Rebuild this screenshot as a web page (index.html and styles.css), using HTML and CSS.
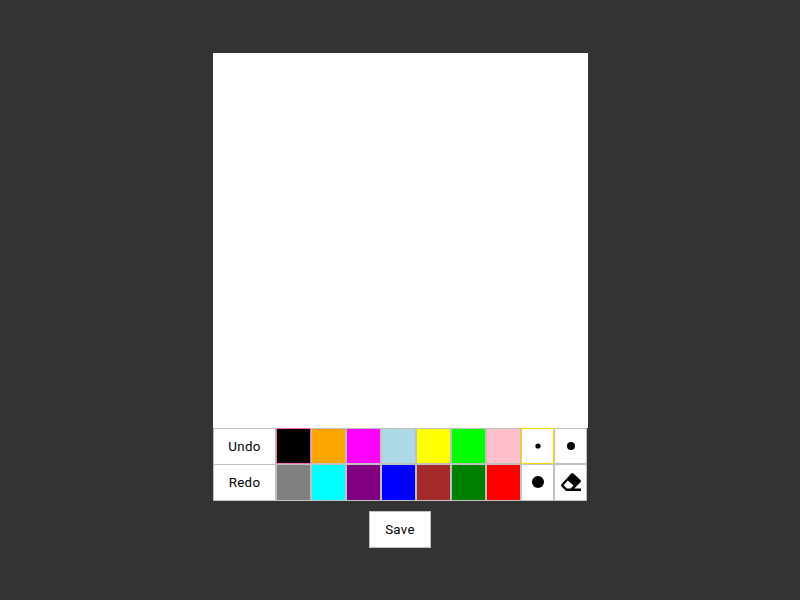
FILE: index.html
```html
<!DOCTYPE html>
<html lang="en">
<head>
<meta charset="utf-8">
<title>Drawing</title>
<link rel="stylesheet" href="styles.css">
</head>
<body>
<main class="app">
  <div class="canvas"></div>
  <div class="toolbar">
    <button class="btn undo">Undo</button>
    <button class="swatch black selected"></button>
    <button class="swatch orange"></button>
    <button class="swatch magenta"></button>
    <button class="swatch lightblue"></button>
    <button class="swatch yellow"></button>
    <button class="swatch lime"></button>
    <button class="swatch pink"></button>
    <button class="tool active"><svg width="24" height="24"><circle cx="12" cy="12" r="2.6"/></svg></button>
    <button class="tool"><svg width="24" height="24"><circle cx="12" cy="12" r="4"/></svg></button>
    <button class="btn redo">Redo</button>
    <button class="swatch gray"></button>
    <button class="swatch cyan"></button>
    <button class="swatch purple"></button>
    <button class="swatch blue"></button>
    <button class="swatch brown"></button>
    <button class="swatch green"></button>
    <button class="swatch red"></button>
    <button class="tool lower"><svg width="24" height="24"><circle cx="12" cy="12" r="6"/></svg></button>
    <button class="tool lower"><svg width="20" height="18" viewBox="0 0 20 18"><path fill-rule="evenodd" d="M10.300.6a1.600 1.600 0 0 1 2.200 0l6.900 6.300a1.600 1.600 0 0 1 0 2.300L13.300 15.500H20V18H5L.6 13.400a1.600 1.600 0 0 1 0-2.300zM6.800 7.500L3 11.700a.8.8 0 0 0 0 1.100l2.900 2.700h3.800l2.300-2.500a.8.8 0 0 0 0-1z"/></svg></button>
  </div>
  <button class="btn save">Save</button>
</main>
</body>
</html>
```
FILE: styles.css
```css
* {
  box-sizing: border-box;
}

body {
  margin: 0;
  background: #333;
}

.app {
  display: flex;
  flex-direction: column;
  align-items: center;
  width: 375px;
  margin-left: 213px;
  padding-top: 53px;
}

.canvas {
  width: 375px;
  height: 375px;
  background: #fff;
}

.toolbar {
  display: grid;
  grid-template-columns: 63px repeat(7, 35px) repeat(2, 33px);
  grid-template-rows: 36px 37px;
  align-self: flex-start;
}

button {
  display: flex;
  align-items: center;
  justify-content: center;
  margin: 0;
  padding: 0;
  border: 1px solid silver;
  border-radius: 0;
  background: #fff;
  color: #000;
  font: 13.333px Roboto, "Liberation Sans", sans-serif;
  letter-spacing: 0.3px;
}

.undo {
  height: 37px;
}

.save {
  width: 62px;
  height: 37px;
  margin: 10px 1px 0 0;
}

.lower {
  padding-bottom: 1px;
}

.selected { border-color: hotpink; }
.active { border-color: gold; }

.black { background: black; }
.orange { background: orange; }
.magenta { background: magenta; }
.lightblue { background: lightblue; }
.yellow { background: yellow; }
.lime { background: lime; }
.pink { background: pink; }
.gray { background: gray; }
.cyan { background: cyan; }
.purple { background: purple; }
.blue { background: blue; }
.brown { background: brown; }
.green { background: green; }
.red { background: red; }
```
